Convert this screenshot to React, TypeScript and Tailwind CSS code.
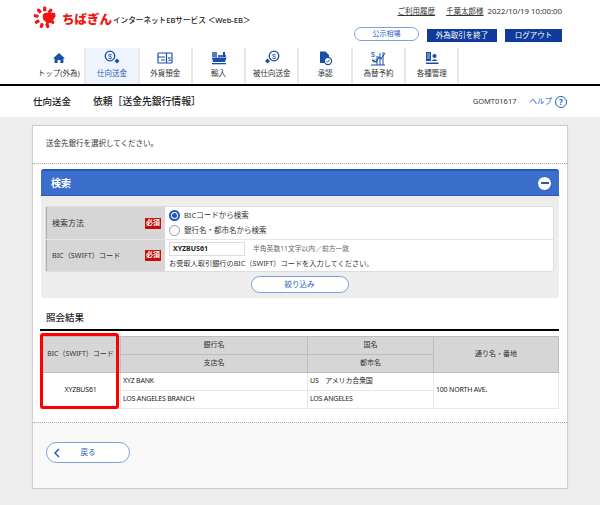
const navy = "#1a4fa8";

function HomeIcon() {
  return (
    <svg width="16" height="16" viewBox="0 0 16 16" fill={navy}>
      <path d="M8 3 L14 8.6 L12.4 8.6 L12.4 13 L9.4 13 L9.4 10 L6.6 10 L6.6 13 L3.6 13 L3.6 8.6 L2 8.6 Z" />
    </svg>
  );
}

function CoinDiamondIcon() {
  return (
    <svg width="16" height="16" viewBox="0 0 16 16" fill="none" stroke={navy}>
      <circle cx="6" cy="6" r="4.8" strokeWidth="1.3" />
      <text x="6" y="8.6" fontSize="7" textAnchor="middle" fill={navy} stroke="none" fontFamily="Liberation Sans">$</text>
      <path d="M13 8.5 L15.5 11 L13 13.5 L10.5 11 Z" fill={navy} stroke="none" />
    </svg>
  );
}

function CardIcon() {
  return (
    <svg width="16" height="16" viewBox="0 0 16 16" fill="none" stroke={navy} strokeWidth="1.2">
      <rect x="1" y="3" width="14" height="10" rx="0.5" />
      <path d="M1 7 H8 M4 10 H8 M9.5 3 V13" />
      <text x="12.3" y="10.5" fontSize="6" textAnchor="middle" fill={navy} stroke="none" fontFamily="Liberation Sans">$</text>
    </svg>
  );
}

function ShipIcon() {
  return (
    <svg width="16" height="16" viewBox="0 0 16 16" fill={navy}>
      <rect x="1" y="2" width="5" height="5" opacity="0.75" />
      <rect x="12" y="2" width="2" height="5" />
      <path d="M7 5 H15 V7 H7 Z" opacity="0.85" />
      <path d="M1 7.5 H15.5 L14 12 H2 Z" />
      <rect x="1" y="13" width="14" height="1.3" />
    </svg>
  );
}

function CoinDiamondRevIcon() {
  return (
    <svg width="16" height="16" viewBox="0 0 16 16" fill="none" stroke={navy}>
      <circle cx="10" cy="6" r="4.8" strokeWidth="1.3" />
      <text x="10" y="8.6" fontSize="7" textAnchor="middle" fill={navy} stroke="none" fontFamily="Liberation Sans">$</text>
      <path d="M3.5 8.5 L6 11 L3.5 13.5 L1 11 Z" fill={navy} stroke="none" />
    </svg>
  );
}

function ApproveIcon() {
  return (
    <svg width="16" height="16" viewBox="0 0 16 16" fill="none">
      <path d="M3 1.5 H8.5 L12 5 V13 H3 Z" fill={navy} />
      <circle cx="11" cy="11" r="3.6" fill="#fff" stroke={navy} strokeWidth="1.2" />
      <path d="M9.3 11 L10.6 12.2 L12.7 9.8" stroke={navy} strokeWidth="1" />
    </svg>
  );
}

function RateIcon() {
  return (
    <svg width="16" height="16" viewBox="0 0 16 16" fill="none" stroke={navy} strokeWidth="1">
      <text x="3" y="7" fontSize="7" textAnchor="middle" fill={navy} stroke="none" fontFamily="Liberation Sans">$</text>
      <text x="4" y="13" fontSize="6" textAnchor="middle" fill={navy} stroke="none" fontFamily="Liberation Sans">¥</text>
      <path d="M7 6 V15 M10 3 V15 M13 2 V15 M1 15 H15" />
      <path d="M2 10 L6 12 L9 7 L11 9 L15 3" strokeWidth="1.1" />
    </svg>
  );
}

function ManageIcon() {
  return (
    <svg width="16" height="16" viewBox="0 0 16 16" fill={navy}>
      <rect x="2" y="2" width="5" height="9" />
      <path d="M3 4 H6 M3 6 H6 M3 8 H6" stroke="#fff" strokeWidth="0.7" />
      <circle cx="10.5" cy="6" r="2.1" />
      <path d="M7.5 11 Q10.5 7.5 13.5 11 Z" />
      <rect x="2" y="12.5" width="12.5" height="1.5" />
    </svg>
  );
}

const navItems = [
  { label: "トップ(外為)", icon: <HomeIcon /> },
  { label: "仕向送金", icon: <CoinDiamondIcon />, active: true },
  { label: "外貨預金", icon: <CardIcon /> },
  { label: "輸入", icon: <ShipIcon /> },
  { label: "被仕向送金", icon: <CoinDiamondRevIcon /> },
  { label: "承認", icon: <ApproveIcon /> },
  { label: "為替予約", icon: <RateIcon /> },
  { label: "各種管理", icon: <ManageIcon /> },
];

function Logo() {
  const petals = [0, 40, 80, 120, 160, 200, 240, 280, 320];
  return (
    <svg width="25" height="23" viewBox="0 0 28 26" fill="#f01414">
      {petals.map((deg) => (
        <rect key={deg} x="11.3" y="0.5" width="3.6" height="6" rx="1.4" transform={`rotate(${deg} 13 13)`} />
      ))}
      <circle cx="13" cy="13" r="7" fill="#fff" />
      <path d="M11 10 Q12 7.5 15 7.5 H24 Q25.5 7.5 25 10 Q24 17 19 19 L14 22 Q15.5 19 14.5 18 Q10 16 11 10 Z" />
    </svg>
  );
}

function PillButton({ children, className }: { children: React.ReactNode; className: string }) {
  return (
    <div className={`flex items-center justify-center rounded-full border border-[#7f9fdc] bg-white text-[#2a5cc0] ${className}`}>
      {children}
    </div>
  );
}

function Required() {
  return (
    <span className="flex h-[11px] w-4 shrink-0 items-center justify-center bg-[#cc0a0a] text-[7px] font-bold text-white">必須</span>
  );
}

const th = "border border-[#bdbdbd] bg-[#d6d6d6] font-normal text-center text-[#333]";
const td = "border border-[#e6e6e6] bg-white px-[2px] text-[#222] tracking-[-0.2px]";

export default function App() {
  return (
    <div
      className="flex h-[505px] w-[600px] flex-col overflow-hidden bg-[#eeeeee] text-[8px] text-[#333]"
      style={{ fontFamily: '"Noto Sans", "Noto Sans CJK JP", sans-serif' }}
    >
      {/* Header */}
      <header className="flex h-12 justify-between bg-white pl-[33px] pr-[38px]">
        <div className="flex items-start pt-[6px]">
          <Logo />
          <span className="ml-[4px] mt-[7px] text-[12.5px] font-black leading-[14px] text-[#f01414]">ちばぎん</span>
          <span className="ml-[1px] mt-[8px] whitespace-nowrap text-[7.6px] font-medium leading-[12px] text-[#222]">インターネットEBサービス ＜Web-EB＞</span>
        </div>
        <div className="flex flex-col items-end pt-[6px]">
          <div className="flex h-3 items-center whitespace-nowrap text-[7.5px]">
            <span className="underline">ご利用履歴</span>
            <span className="ml-[11px] underline">千葉太郎様</span>
            <span className="ml-1 text-[7.8px]">2022/10/19 10:00:00</span>
          </div>
          <div className="mt-[11px] flex items-start">
            <PillButton className="mr-2 mt-[-2px] h-[14px] w-[65px] text-[7px]">公示相場</PillButton>
            <div className="mr-2 flex h-[13px] w-[70px] items-center justify-center bg-[#0f3c9c] text-[7.5px] text-white">外為取引を終了</div>
            <div className="flex h-[13px] w-[57px] items-center justify-center bg-[#0f3c9c] text-[7.5px] text-white">ログアウト</div>
          </div>
        </div>
      </header>

      {/* Nav */}
      <nav className="flex h-[36px] bg-white pl-[33px]">
        {navItems.map((item, i) => (
          <div
            key={item.label}
            className={`flex w-[53.3px] flex-col items-center border-r-2 border-[#e8e8e8] pt-[2px] ${item.active ? "bg-[#eef4fd] text-[#2a5cc0]" : ""} ${i === 7 ? "border-r-0" : ""}`}
          >
            <div className="h-4">{item.icon}</div>
            <span className="mt-[2px] whitespace-nowrap text-[7.5px] leading-[11px]">{item.label}</span>
          </div>
        ))}
      </nav>
      <div className="h-[2px] bg-black" />

      {/* Page title */}
      <div className="flex h-[31px] items-center justify-between border-t border-white bg-white pl-[33px] pr-[33px]">
        <div className="flex font-medium text-[#222]">
          <span className="w-[60px] text-[9.5px]">仕向送金</span>
          <span className="text-[9.8px]">依頼［送金先銀行情報］</span>
        </div>
        <div className="flex items-center text-[7.5px]">
          <span className="mr-[13px]">GOMT01617</span>
          <span className="text-[#2a5cc0]">ヘルプ</span>
          <span className="ml-[3px] flex h-3 w-3 items-center justify-center rounded-full border border-[#2a5cc0] text-[8px] font-bold text-[#2a5cc0]">?</span>
        </div>
      </div>

      {/* Card */}
      <main className="mx-[32px] mt-2 h-[364px] overflow-hidden border border-[#cfcfcf] bg-white shadow-[0_0_2px_#ddd]">
        <div className="flex h-[38px] items-center border-b border-dotted border-[#aaaaaa] pb-[1px] pl-[13px] text-[7.5px]">
          送金先銀行を選択してください。
        </div>

        <section className="ml-2 mr-2 mt-[5px]">
          <div className="flex h-[27px] items-center justify-between rounded-t-[3px] border-b border-t-2 border-[#2558bb] bg-[#3c6fcb] pl-[10px] pr-[7px]">
            <span className="text-[10px] font-bold text-white">検索</span>
            <span className="flex h-[15px] w-[15px] items-center justify-center rounded-full border border-[#2558bb] bg-white">
              <span className="h-[2px] w-2 bg-[#2558bb]" />
            </span>
          </div>
          <div className="h-[102px] rounded-b-[2px] bg-[#ededed] pl-[4px] pr-[5px] pt-[10px]">
            <div className="h-[66px] rounded-[2px] border border-[#dddddd] bg-white">
              <div className="flex h-[33px] border-b border-[#e4e4e4]">
                <div className="flex w-[119px] items-center justify-between border-l border-[#aaaaaa] bg-[#d6d6d6] pl-[5px] pr-1">
                  <span>検索方法</span>
                  <Required />
                </div>
                <div className="flex flex-col justify-center gap-[3px] pl-[4px]">
                  <div className="flex items-center">
                    <span className="flex h-[11px] w-[11px] items-center justify-center rounded-full border-2 border-[#1f55bb] bg-white">
                      <span className="h-[5px] w-[5px] rounded-full bg-[#1f55bb]" />
                    </span>
                    <span className="ml-[4px] text-[7.5px]">BICコードから検索</span>
                  </div>
                  <div className="flex items-center">
                    <span className="h-[11px] w-[11px] rounded-full border border-[#999999] bg-white" />
                    <span className="ml-[4px] text-[7.5px]">銀行名・都市名から検索</span>
                  </div>
                </div>
              </div>
              <div className="flex h-[31px]">
                <div className="flex w-[119px] items-center justify-between border-l border-[#aaaaaa] bg-[#d6d6d6] pl-[5px] pr-1">
                  <span className="whitespace-nowrap text-[7.2px]">BIC（SWIFT）コード</span>
                  <Required />
                </div>
                <div className="pl-[4px] pt-[2px]">
                  <div className="flex items-center">
                    <span className="flex h-[14px] w-[76px] items-center border border-[#dddddd] pl-[3px] text-[7px] font-bold text-[#222]">XYZBUS61</span>
                    <span className="ml-2 text-[6.8px] text-[#666]">半角英数11文字以内／前方一致</span>
                  </div>
                  <div className="mt-[1px] whitespace-nowrap text-[7.2px] leading-[12px]">お受取人取引銀行のBIC（SWIFT）コードを入力してください。</div>
                </div>
              </div>
            </div>
            <PillButton className="mx-auto mt-[4px] h-[17px] w-[98px] text-[7.5px]">絞り込み</PillButton>
          </div>
        </section>

        <div className="relative ml-[7px] mr-2 mt-[13px]">
          <h2 className="border-b-2 border-black pb-[4px] pl-[6px] text-[9.5px] font-medium leading-[14px] text-[#222]">照会結果</h2>
          <table className="mt-[5px] w-full table-fixed border-collapse text-[7px]">
            <colgroup>
              <col className="w-[80px]" />
              <col className="w-[187px]" />
              <col className="w-[126px]" />
              <col />
            </colgroup>
            <tbody>
              <tr className="h-[18px]">
                <th rowSpan={2} className={`${th} whitespace-nowrap`}>BIC（SWIFT）コード</th>
                <th className={th}>銀行名</th>
                <th className={th}>国名</th>
                <th rowSpan={2} className={th}>通り名・番地</th>
              </tr>
              <tr className="h-[18px]">
                <th className={th}>支店名</th>
                <th className={th}>都市名</th>
              </tr>
              <tr className="h-[18px]">
                <td rowSpan={2} className={`${td} text-center`}>XYZBUS61</td>
                <td className={td}>XYZ BANK</td>
                <td className={td}>US　アメリカ合衆国</td>
                <td rowSpan={2} className={td}>100 NORTH AVE.</td>
              </tr>
              <tr className="h-[18px]">
                <td className={td}>LOS ANGELES BRANCH</td>
                <td className={td}>LOS ANGELES</td>
              </tr>
            </tbody>
          </table>
          {/* red highlight over first column */}
          <div className="absolute left-0 top-[22px] h-[76px] w-[79px] rounded-[3px] border-[3px] border-[#ff0000]" />
        </div>

        <div className="mt-[13px] h-[70px] border-t border-dotted border-[#aaaaaa] bg-[#f8f8f8] pl-[13px] pt-[19px]">
          <PillButton className="relative h-[21px] w-[84px] text-[7.5px]">
            <svg className="absolute left-[6px]" width="8" height="10" viewBox="0 0 8 10" fill="none" stroke="#2a5cc0" strokeWidth="1.5">
              <path d="M6 1 L2 5 L6 9" />
            </svg>
            戻る
          </PillButton>
        </div>
      </main>
    </div>
  );
}
